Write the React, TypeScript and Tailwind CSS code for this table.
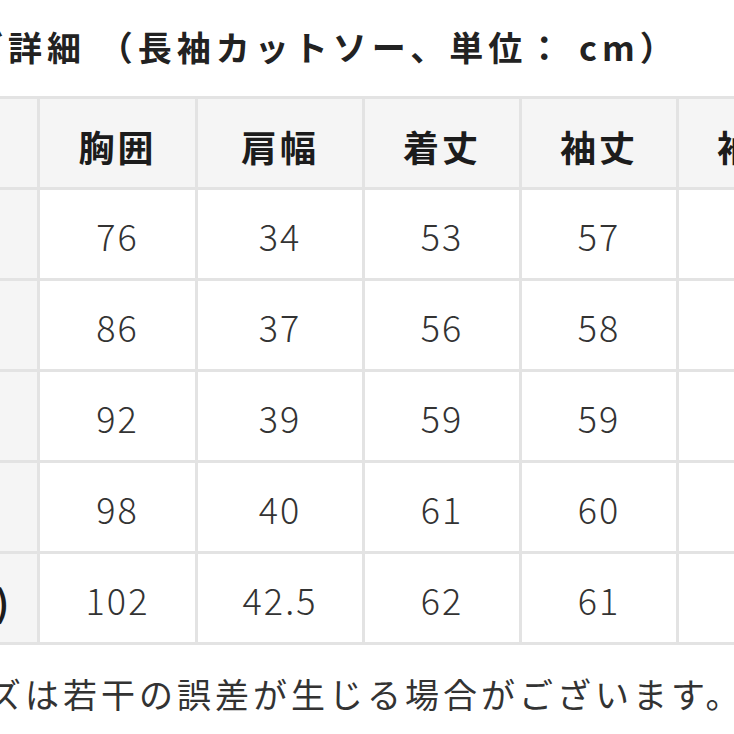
const font = "font-['Noto_Sans_CJK_JP','Noto_Sans',sans-serif]"

const headers = ['胸囲', '肩幅', '着丈', '袖丈', '袖口']

// サイズ別の実寸（最後の列は画面外）
const rows: { label: string; values: string[] }[] = [
  { label: 'XS', values: ['76', '34', '53', '57', '19'] },
  { label: 'S', values: ['86', '37', '56', '58', '20'] },
  { label: 'M', values: ['92', '39', '59', '59', '21'] },
  { label: 'L', values: ['98', '40', '61', '60', '22'] },
  { label: 'XL(LL)', values: ['102', '42.5', '62', '61', '23'] },
]

function HeadCell({ children, side }: { children?: React.ReactNode; side?: boolean }) {
  return (
    <div
      className={`flex items-center justify-center bg-[#f5f5f5] pt-[6px] text-[36px] font-bold tracking-[3px] text-[#1c1c1c] ${side ? 'pr-[22px]' : ''}`}
    >
      {children}
    </div>
  )
}

function ValueCell({ value }: { value: string }) {
  return (
    <div className="flex items-center justify-center bg-white pt-[1px] text-[36px] font-light tracking-[2px] text-[#333]">
      {value}
    </div>
  )
}

export default function App() {
  return (
    <div className={`relative h-[734px] w-[734px] overflow-hidden bg-white ${font}`}>
      <div className="ml-[-108px] mt-[27px] whitespace-nowrap text-[34px] font-bold leading-[40px] tracking-[5px] text-[#222]">
        サイズ詳細 （長袖カットソー、単位： cm）
      </div>

      <div className="ml-[-124px] mt-[29px] grid w-max auto-rows-[88px] grid-cols-[158px_155px_164px_154px_154px_154px] gap-[3px] bg-[#e3e3e3] p-[3px]">
        <HeadCell side />
        {headers.map((h) => (
          <HeadCell key={h}>{h}</HeadCell>
        ))}
        {rows.map((r) => (
          <Row key={r.label} label={r.label} values={r.values} />
        ))}
      </div>

      <div className="ml-[-88px] mt-[29px] whitespace-nowrap text-[34px] leading-[40px] tracking-[4px] text-[#333]">
        サイズは若干の誤差が生じる場合がございます。
      </div>
    </div>
  )
}

function Row({ label, values }: { label: string; values: string[] }) {
  return (
    <>
      <HeadCell side>{label}</HeadCell>
      {values.map((v, i) => (
        <ValueCell key={i} value={v} />
      ))}
    </>
  )
}
